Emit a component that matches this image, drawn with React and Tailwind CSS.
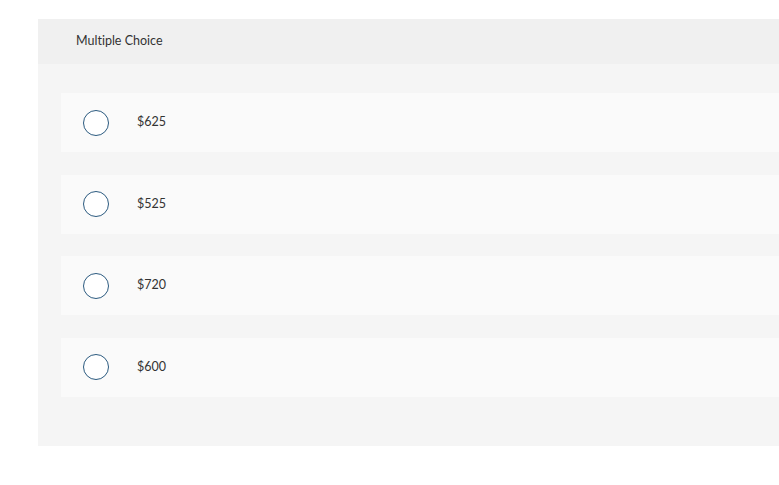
const options = ["$625", "$525", "$720", "$600"]

function App() {
  return (
    <div className="min-h-[485px] w-[779px] overflow-hidden bg-white pt-[19px] pl-[38px] font-['Lato','Liberation_Sans',sans-serif] [font-variant-ligatures:none]">
      <div className="w-[780px] bg-[#f5f5f5]">
        <div className="flex h-[45px] items-center bg-[#f0f0f0] pl-[38px] text-[12.5px] text-[#333]">
          Multiple Choice
        </div>
        <div className="flex flex-col gap-[22.5px] pl-[23px] pr-[23px] pt-[29px] pb-[49px]">
          {options.map((o) => (
            <div key={o} className="flex h-[59px] items-center bg-[#fafafa]">
              <div className="ml-[22px] h-[26px] w-[26px] rounded-full border-[1.5px] border-[#2b5a7f] bg-white" />
              <span className="ml-[28px] text-[12.5px] text-[#333]">{o}</span>
            </div>
          ))}
        </div>
      </div>
    </div>
  )
}

export default App
